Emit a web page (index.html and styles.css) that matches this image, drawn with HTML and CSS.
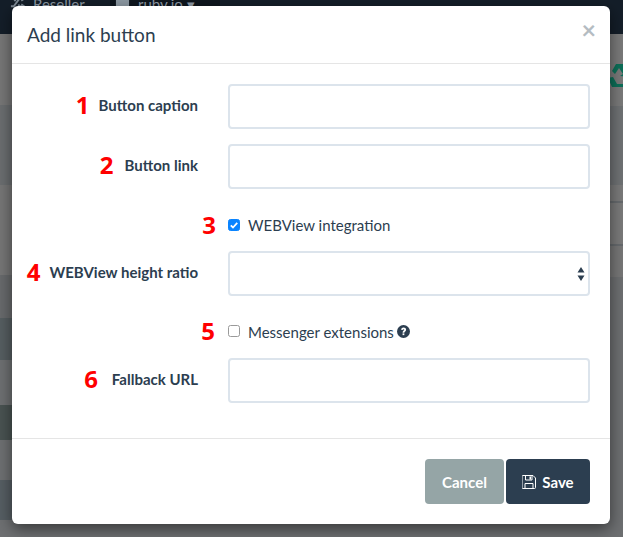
FILE: index.html
```html
<!DOCTYPE html>
<html lang="en">
<head>
<meta charset="utf-8">
<title>Add link button</title>
<link rel="stylesheet" href="styles.css">
</head>
<body>
<div class="stage">
  <div class="backdrop">
    <div class="nav">
      <div class="nav-item">
        <svg class="nav-icon" viewBox="0 0 16 16"><path d="M1 12h3l6-8h4M1 4h3l2 2.500M9 10l1 2h4M12 2l3 2-3 2M12 10l3 2-3 2" fill="none" stroke="#7f8b96" stroke-width="2"/></svg>
        <span>Reseller</span>
      </div>
      <div class="nav-item nav-item-active">
        <svg class="nav-icon" viewBox="0 0 16 16"><ellipse cx="8" cy="3" rx="7" ry="5" fill="#8d99a3"/><path d="M1 5v8c0 2 14 2 14 0V5" fill="#8d99a3"/></svg>
        <span>ruby.io ▾</span>
      </div>
    </div>
    <div class="bands">
      <div class="band-col">
        <div class="band band-a"></div>
        <div class="band band-b"></div>
        <div class="band band-c"></div>
        <div class="band band-d"></div>
        <div class="band band-e"></div>
        <div class="band band-f"></div>
        <div class="band band-g"></div>
        <div class="band band-h"></div>
        <div class="band band-i"></div>
        <div class="band band-j"></div>
      </div>
      <div class="band-col band-col-right">
        <div class="band band-r1">
          <svg class="recycle" viewBox="0 0 26 26"><path d="M9 1h8l4 6 3-2-2 9-9-1 3-2-4-6-4 6-3-3zM1 15l5-1 4 7h6v-3l5 5-5 4v-3H5zM25 16l-3 9h-2l-2-4 4-1 1-4z" fill="#0c6f58"/></svg>
        </div>
        <div class="band band-r2"></div>
        <div class="band band-r3"></div>
        <div class="band band-r4"></div>
        <div class="band band-r5"></div>
        <div class="band band-r6"></div>
      </div>
    </div>
  </div>

  <section class="modal">
    <header class="modal-header">
      <h1 class="modal-title">Add link button</h1>
      <span class="close">×</span>
    </header>
    <form class="modal-body">
      <div class="mark-cell text-cell"><span class="mark mark-near">1</span><label class="field-label">Button caption</label></div>
      <input class="control" type="text">

      <div class="mark-cell text-cell"><span class="mark">2</span><label class="field-label">Button link</label></div>
      <input class="control" type="text">

      <div class="mark-cell check-cell"><span class="mark">3</span></div>
      <div class="check-row">
        <span class="check check-on"><svg viewBox="0 0 13 13"><path d="M3 6.800l2.400 2.400L10 4.200" fill="none" stroke="#fff" stroke-width="1.900"/></svg></span>
        <span class="check-label">WEBView integration</span>
      </div>

      <div class="mark-cell text-cell"><span class="mark mark-near">4</span><label class="field-label">WEBView height ratio</label></div>
      <div class="select-wrap">
        <select class="control"></select>
        <svg class="select-arrows" viewBox="0 0 8 14"><path d="M4 0l3.500 5.500h-7zM4 14L.5 8.500h7z" fill="#2c3e50"/></svg>
      </div>

      <div class="mark-cell check-cell"><span class="mark mark-up">5</span></div>
      <div class="check-row">
        <span class="check check-off"></span>
        <span class="check-label">Messenger extensions</span>
        <svg class="help" viewBox="0 0 14 14"><circle cx="7" cy="7" r="7" fill="#2c3e50"/><path d="M4.400 5.200C4.700 3.600 5.800 2.800 7.100 2.800c1.500 0 2.700.9 2.700 2.300 0 1.900-1.900 1.700-1.900 3.200H6c0-2.300 1.800-2.100 1.800-3.100 0-.4-.3-.7-.8-.7-.5 0-.8.3-.9 1z" fill="#fff"/><rect x="6" y="9" width="1.900" height="1.900" fill="#fff"/></svg>
      </div>

      <div class="mark-cell text-cell"><span class="mark mark-far">6</span><label class="field-label">Fallback URL</label></div>
      <input class="control" type="text">
    </form>
    <footer class="modal-footer">
      <button class="btn btn-cancel" type="button">Cancel</button>
      <button class="btn btn-save" type="button">
        <svg class="save-icon" viewBox="0 0 14 14"><path d="M1 .5h10l2.500 2.500v9.500a1 1 0 0 1-1 1h-11.500a1 1 0 0 1-1-1v-11a1 1 0 0 1 1-1z" fill="none" stroke="#fff" stroke-width="1"/><path d="M3.500 1v4h6.500V1M3 13.500V8.500h8v5" fill="none" stroke="#fff" stroke-width="1"/><rect x="7.500" y="1.500" width="1.500" height="3" fill="#fff"/></svg>
        <span>Save</span>
      </button>
    </footer>
  </section>
</div>
</body>
</html>
```
FILE: styles.css
```css
* { box-sizing: border-box; }
html, body { margin: 0; height: 100%; overflow: hidden; }
body { font-family: Lato, "Liberation Sans", sans-serif; color: #2c3e50; background: #6d6f70; }

.stage { display: grid; width: 623px; height: 537px; overflow: hidden; }
.stage > * { grid-area: 1 / 1; }

.backdrop { display: flex; flex-direction: column; height: 537px; }
.nav { display: flex; height: 34px; background: #141e29; padding-left: 10px; flex: none; }
.nav-item { display: flex; gap: 8px; align-items: flex-start; width: 90px; height: 34px; font-size: 15px; line-height: 15px; color: #8f9ba6; }
.nav-item span { margin-top: -3px; white-space: nowrap; }
.nav-item-active { background: #0e161e; width: 110px; margin-left: 10px; padding-left: 5px; }
.nav-icon { width: 15px; height: 15px; margin-top: -5px; flex: none; }

.bands { display: flex; flex: 1; }
.band-col { flex: 1; display: flex; flex-direction: column; }
.band-col-right { flex: none; width: 13px; }
.band { flex: none; }
.band-a { height: 71px; background: #777; }
.band-b { height: 80px; background: #6b6e70; }
.band-c { height: 90px; background: #767676; }
.band-d { height: 43px; background: #686a6c; }
.band-e { height: 42px; background: #565e61; }
.band-f { height: 45px; background: #6e7072; }
.band-g { height: 35px; background: #495352; }
.band-h { height: 40px; background: #6e7072; }
.band-i { height: 40px; background: #565e63; }
.band-j { height: 17px; background: #6e7072; }
.band-r1 { height: 72px; background: #7a7a7a; overflow: hidden; }
.band-r2 { height: 79px; background: #6f7274; }
.band-r3 { height: 18px; background: #7a7a7a; border-bottom: 2px solid #666a6d; }
.band-r4 { height: 43px; background: #7a7a7a; border-bottom: 2px solid #666a6d; }
.band-r5 { height: 31px; background: #777; }
.band-r6 { flex: 1; background: #6d6f71; }
.recycle { display: block; width: 26px; height: 26px; margin-top: 29px; margin-left: -3px; }

.modal { display: flex; flex-direction: column; align-self: start; justify-self: start; width: 598px; height: 518px; margin: 6px 0 0 12px; background: #fff; border-radius: 6px; box-shadow: 0 5px 15px rgba(0, 0, 0, .5); }
.modal-header { display: flex; justify-content: space-between; align-items: flex-start; height: 58px; padding: 0 15px; border-bottom: 1px solid #e5e5e5; flex: none; }
.modal-title { margin: 15px 0 0; font-size: 19px; font-weight: 400; line-height: 28px; color: #2c3e50; }
.close { font-size: 25px; font-weight: 700; line-height: 25px; margin: 11px -1px 0 0; color: #b4bcc2; }

.modal-body { display: grid; grid-template-columns: 216px 362px; row-gap: 15px; padding: 20px 0 35px; flex: none; }
.mark-cell { display: flex; justify-content: flex-end; align-items: center; gap: 11px; }
.text-cell { padding: 0 30px 4px 0; }
.check-cell { padding-right: 12px; align-items: flex-end; height: 32px; }
.mark { font-family: "Open Sans", sans-serif; color: #f00; font-size: 24px; font-weight: 700; line-height: 24px; }
.mark-near { margin-right: -2px; }
.mark-far { margin-right: 3px; }
.check-cell .mark { margin-bottom: -1px; }
.check-cell .mark-up { margin: 0 1px 0 0; }
.field-label { font-size: 15px; font-weight: 700; color: #2c3e50; }

.control { display: block; width: 362px; height: 45px; border: 2px solid #dce4ec; border-radius: 4px; background: #fff; padding: 0 15px; appearance: none; font: inherit; outline: none; }

.check-row { display: flex; align-items: center; height: 22px; margin-top: 10px; }
.check { display: flex; width: 12px; height: 12px; border: 1px solid #9a9a9a; border-radius: 2.500px; background: #fff; margin-right: 8px; flex: none; }
.check-off { margin-top: -2px; }
.check-on { background: #0a84ff; border-color: #0a84ff; }
.check-on svg { width: 12px; height: 12px; margin: -1px 0 0 -1px; flex: none; }
.check-label { font-size: 15px; line-height: 22px; color: #2c3e50; }
.help { width: 13px; height: 13px; margin: -2px 0 0 3px; flex: none; }

.select-wrap { position: relative; width: 362px; height: 45px; }
.select-arrows { position: absolute; right: 5px; top: 16px; width: 8px; height: 14px; }

.modal-footer { display: flex; justify-content: flex-end; gap: 2px; padding: 20px 20px 20px 0; border-top: 1px solid #e5e5e5; flex: none; }
.btn { display: flex; align-items: center; justify-content: center; gap: 6px; height: 45px; border: 0; border-radius: 4px; color: #fff; font: 700 15px Lato, sans-serif; padding: 0; }
.btn-cancel { width: 79px; background: #95a5a6; }
.btn-save { width: 84px; background: #2c3e50; }
.save-icon { width: 14px; height: 14px; flex: none; }
```
